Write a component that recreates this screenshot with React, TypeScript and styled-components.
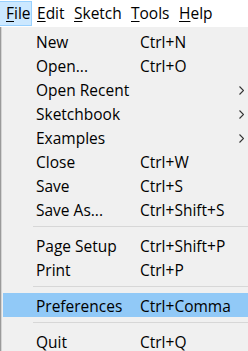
import React from "react";
import styled, { createGlobalStyle } from "styled-components";

const GlobalStyle = createGlobalStyle`
  html, body {
    margin: 0;
    padding: 0;
    background: #ffffff;
  }
  body {
    font-family: "Open Sans", "Noto Sans", "Liberation Sans", sans-serif;
    font-size: 15.5px;
    color: #000;
  }
`;

interface ActiveProps {
  active?: boolean;
}

interface TitleProps extends ActiveProps {
  w: number;
  pad: number;
}

interface Item {
  label: string;
  shortcut?: string;
  submenu?: boolean;
  highlighted?: boolean;
}

type Entry = Item | "separator";

const entries: Entry[] = [
  { label: "New", shortcut: "Ctrl+N" },
  { label: "Open...", shortcut: "Ctrl+O" },
  { label: "Open Recent", submenu: true },
  { label: "Sketchbook", submenu: true },
  { label: "Examples", submenu: true },
  { label: "Close", shortcut: "Ctrl+W" },
  { label: "Save", shortcut: "Ctrl+S" },
  { label: "Save As...", shortcut: "Ctrl+Shift+S" },
  "separator",
  { label: "Page Setup", shortcut: "Ctrl+Shift+P" },
  { label: "Print", shortcut: "Ctrl+P" },
  "separator",
  { label: "Preferences", shortcut: "Ctrl+Comma", highlighted: true },
  "separator",
  { label: "Quit", shortcut: "Ctrl+Q" },
];

// cell width and text inset for each menu bar title
const titles = [
  { text: "File", w: 32, pad: 6 },
  { text: "Edit", w: 36, pad: 5 },
  { text: "Sketch", w: 57, pad: 6 },
  { text: "Tools", w: 49, pad: 6 },
  { text: "Help", w: 40, pad: 5 },
];

const Window = styled.div`
  width: 248px;
  height: 351px;
  overflow: hidden;
  display: flex;
  flex-direction: column;
`;

const MenuBar = styled.div`
  height: 27px;
  display: flex;
  align-items: stretch;
  background: #ffffff;
  padding: 1px 0 1px;
  box-sizing: border-box;
`;

const MenuTitle = styled.div<TitleProps>`
  display: flex;
  align-items: center;
  box-sizing: border-box;
  width: ${p => p.w}px;
  padding: 0 0 1px ${p => p.pad}px;
  border: 1px solid ${p => (p.active ? "#99d1ff" : "transparent")};
  border-left-width: 0;
  background: ${p => (p.active ? "#cce8ff" : "transparent")};
  white-space: nowrap;
`;

const Mnemonic = styled.span`
  text-decoration: underline;
  text-underline-offset: 2px;
`;

const Dropdown = styled.div`
  flex: 1;
  background: #f0f0f0;
  border-left: 1px solid #9a9a9a;
  box-shadow: inset 1px 0 0 #d4d4d4;
  padding: 2px 0 0 2px;
`;

const Row = styled.div<ActiveProps>`
  height: 24px;
  box-sizing: border-box;
  padding-top: 2px;
  display: flex;
  align-items: center;
  line-height: 14px;
  background: ${p => (p.active ? "#91c9f7" : "transparent")};
`;

const Label = styled.span`
  width: 104px;
  padding-left: 33px;
  white-space: nowrap;
`;

const Shortcut = styled.span`
  flex: 1;
  white-space: nowrap;
`;

const Arrow = styled.svg`
  width: 5px;
  height: 9px;
  margin-right: 4px;
`;

const Separator = styled.div`
  height: 1px;
  margin: 5px 0 6px 30px;
  background: #d7d7d7;
`;

export default function App() {
  return (
    <>
      <GlobalStyle />
      <Window>
        <MenuBar>
          {titles.map((t, i) => (
            <MenuTitle key={t.text} active={i === 0} w={t.w} pad={t.pad}>
              <Mnemonic>{t.text[0]}</Mnemonic>
              {t.text.slice(1)}
            </MenuTitle>
          ))}
        </MenuBar>
        <Dropdown>
          {entries.map((e, i) =>
            e === "separator" ? (
              <Separator key={i} />
            ) : (
              <Row key={i} active={e.highlighted}>
                <Label>{e.label}</Label>
                <Shortcut>{e.shortcut}</Shortcut>
                {e.submenu && (
                  <Arrow viewBox="0 0 5 9">
                    <path d="M0.5 0.5 L4.5 4.5 L0.5 8.5" fill="none" stroke="#333" strokeWidth="1.1" />
                  </Arrow>
                )}
              </Row>
            )
          )}
        </Dropdown>
      </Window>
    </>
  );
}
